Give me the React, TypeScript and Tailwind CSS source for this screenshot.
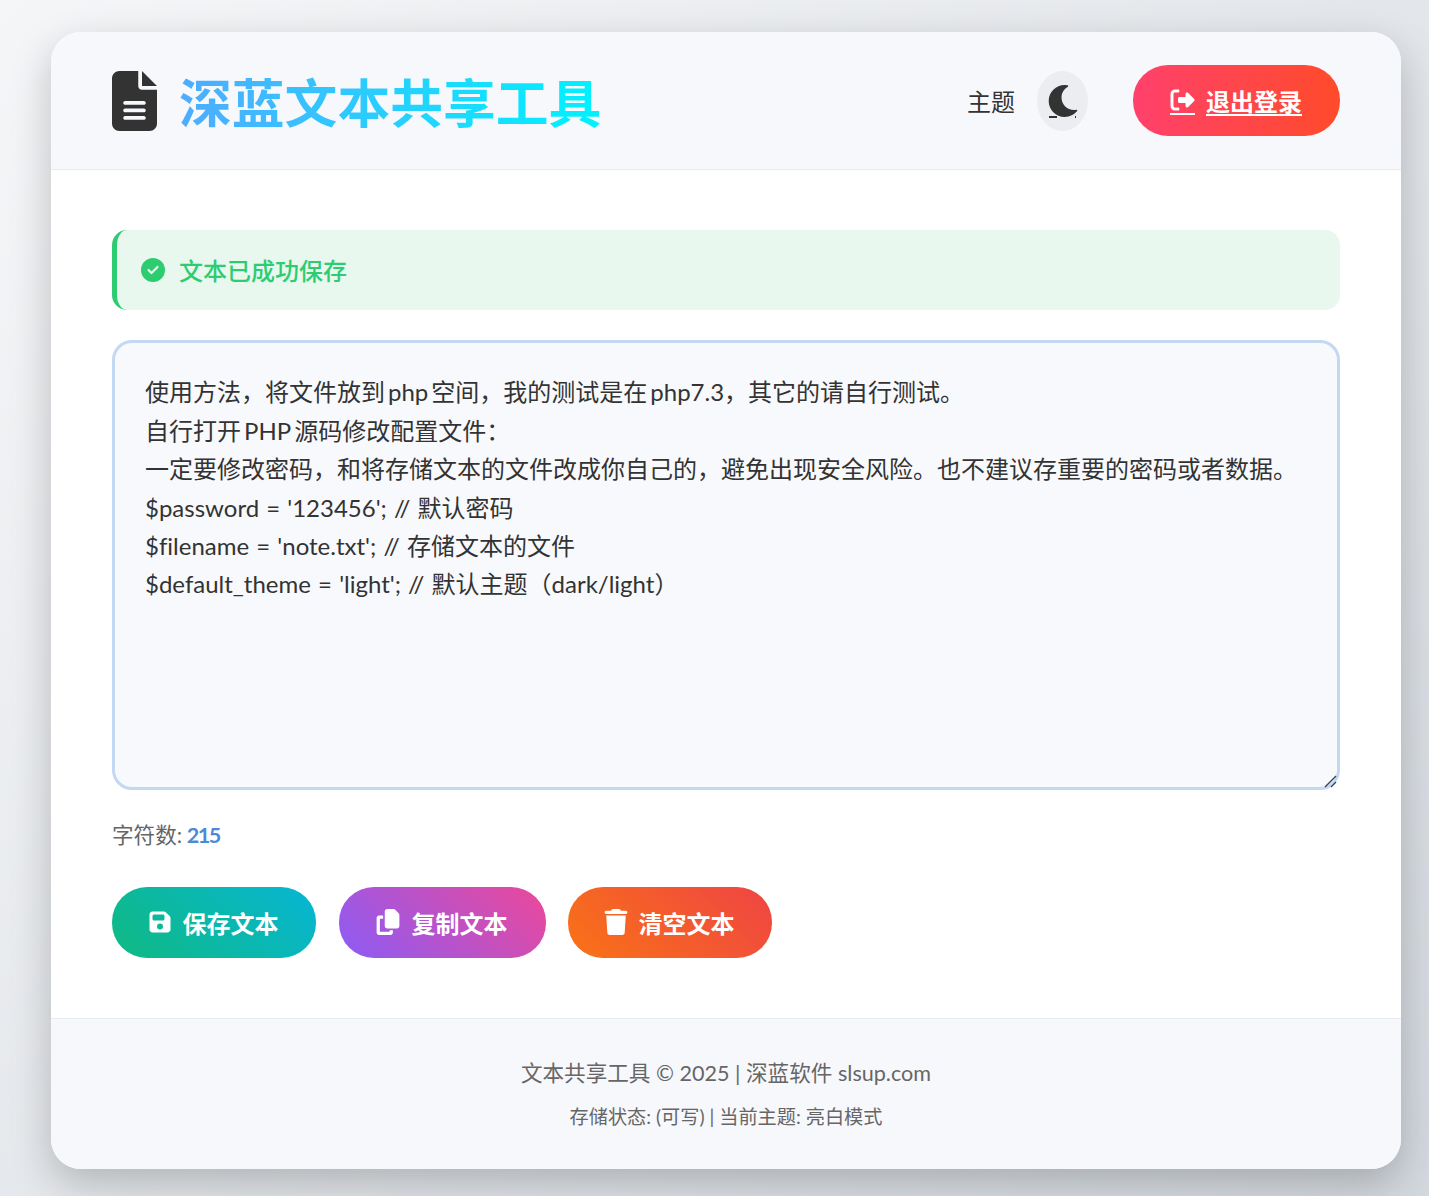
import React from "react";
import { FaMoon } from "react-icons/fa";
import { FaFileLines, FaRightFromBracket, FaCircleCheck, FaFloppyDisk, FaCopy, FaTrash } from "react-icons/fa6";

const text = `使用方法，将文件放到php空间，我的测试是在php7.3，其它的请自行测试。
自行打开PHP源码修改配置文件：
一定要修改密码，和将存储文本的文件改成你自己的，避免出现安全风险。也不建议存重要的密码或者数据。
$password = '123456'; // 默认密码
$filename = 'note.txt'; // 存储文本的文件
$default_theme = 'light'; // 默认主题（dark/light）`;

export default function App() {
  return (
    <div className="min-h-[1196px] bg-[linear-gradient(135deg,#f5f6f8_0%,#d3d8de_100%)] pt-8 pl-[51px] overflow-hidden [font-family:'Lato','Noto_Sans_CJK_SC',sans-serif] [text-autospace:normal] [font-variant-ligatures:none]">
      <div className="w-[1350px] h-[1137px] rounded-[30px] bg-white overflow-hidden shadow-[0_15px_40px_rgba(0,0,0,0.22)] flex flex-col">
        <header className="h-[138px] shrink-0 bg-[#f7f8fc] border-b border-[#e9ecef] px-[61px] flex items-center justify-between">
          <div className="flex items-center gap-[22px]">
            <FaFileLines className="w-[45px] h-[60px] text-[#333333]" />
            <h1 className="mt-[5px] text-[52.8px] leading-[72px] font-bold bg-[linear-gradient(90deg,#4facfe,#00f2fe)] bg-clip-text text-transparent">深蓝文本共享工具</h1>
          </div>
          <div className="flex items-center -mt-[1px]">
            <span className="text-[24px] text-[#333333] mr-[22px] mt-[4px]">主题</span>
            <div className="w-[51px] h-[60px] mt-[2px] rounded-[50%] bg-[#ecedf0] relative flex items-center justify-center mr-[45px]">
              <FaMoon className="w-[32px] h-[32px] text-[#333333]" />
              <span className="absolute left-[12px] top-[45px] w-[8px] h-[2px] bg-[#333333]" />
              <span className="absolute left-[38px] top-[45px] w-[1px] h-[2px] bg-[#333333]" />
            </div>
            <a className="w-[207px] h-[71px] pr-[1px] rounded-[35px] bg-[linear-gradient(90deg,#ff416c,#ff4b2b)] flex items-center justify-center text-white font-bold text-[24px] gap-[11px]">
              <span className="border-b-2 border-white pb-[1px] mt-[3px]"><FaRightFromBracket className="w-[25px] h-[24px]" /></span>
              <span className="underline decoration-2 underline-offset-[3px] mt-[3px]">退出登录</span>
            </a>
          </div>
        </header>

        <main className="flex-1 px-[61px] pt-[60px]">
          <div className="h-[80px] rounded-[15px] bg-[#e8f8ef] border-l-[5px] border-[#2ecc71] flex items-center pl-[24px] gap-[15px] text-[#2ecc71] text-[24px] font-medium">
            <FaCircleCheck className="w-[24px] h-[24px] -mt-[1px]" />
            <span className="mt-[1px] -ml-[1px]">文本已成功保存</span>
          </div>
          <div className="relative mt-[30px]">
            <textarea
              readOnly
              defaultValue={text}
              className="block w-full h-[450px] rounded-[20px] border-[3px] border-[#c3d8f1] bg-[#f8f9fc] px-[30px] pt-[30.3px] text-[24px] leading-[38.4px] [word-spacing:1px] text-[#333333] outline-none resize-none"
            />
            <svg className="absolute right-[3px] bottom-[2px] w-[13px] h-[13px]" viewBox="0 0 13 13">
              <path d="M1 12L12 1M7 12L12 7" stroke="#3a4256" strokeWidth="1.4" fill="none" />
            </svg>
          </div>
          <div className="mt-[29px] text-[21.6px] leading-[32px] text-[#666666]">
            字符数: <span className="-ml-[1px] text-[#4a8ad8] font-bold tracking-[-1.5px]">215</span>
          </div>
          <div className="mt-[36px] flex gap-[22.5px] text-white font-bold text-[24px]">
            <button className="w-[204px] h-[71px] pr-[2px] rounded-[35px] bg-[linear-gradient(45deg,#10b981,#06b6d4)] flex items-center justify-center gap-[11px]">
              <FaFloppyDisk className="w-[24px] h-[24px] -mt-[1px]" /><span className="mt-[2px]">保存文本</span>
            </button>
            <button className="w-[207px] h-[71px] pr-[2px] rounded-[35px] bg-[linear-gradient(45deg,#8b5cf6,#ec4899)] flex items-center justify-center gap-[11px]">
              <FaCopy className="w-[26px] h-[26px] -mt-[1px]" /><span className="mt-[2px]">复制文本</span>
            </button>
            <button className="w-[204px] h-[71px] pr-[2px] rounded-[35px] bg-[linear-gradient(45deg,#f97316,#ef4444)] flex items-center justify-center gap-[11px]">
              <FaTrash className="w-[24px] h-[26px] -mt-[1px]" /><span className="mt-[2px]">清空文本</span>
            </button>
          </div>
        </main>

        <footer className="h-[151px] shrink-0 bg-[#f7f8fc] border-t border-[#e9ecef] flex flex-col items-center pt-[36px]">
          <p className="text-[21.6px] leading-[36px] text-[#666666]">文本共享工具 © 2025 | 深蓝软件 slsup.com</p>
          <p className="mt-[13px] text-[19.2px] leading-[26px] text-[#666666]">存储状态: (可写) | 当前主题: 亮白模式</p>
        </footer>
      </div>
    </div>
  );
}
